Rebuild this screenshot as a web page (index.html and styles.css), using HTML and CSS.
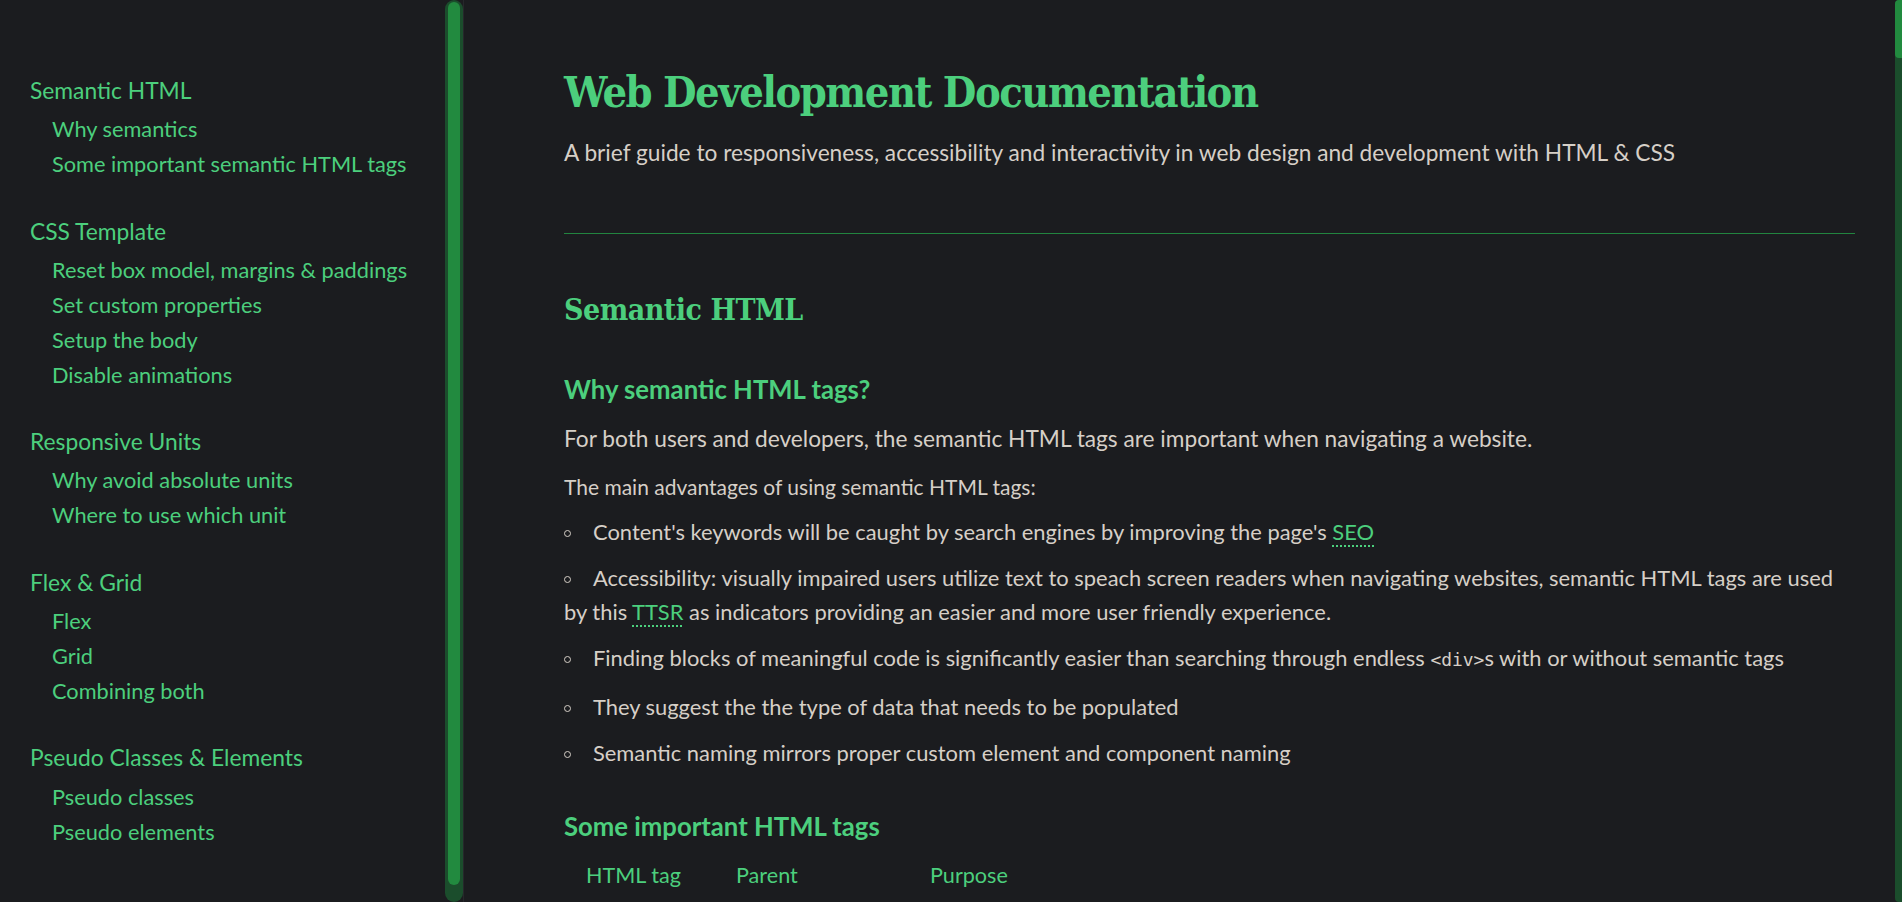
FILE: index.html
```html
<!DOCTYPE html>
<html lang="en">
<head>
<meta charset="utf-8">
<title>Web Development Documentation</title>
<link rel="stylesheet" href="styles.css">
</head>
<body>
<nav class="sidebar" id="navbar">
  <ul class="toc">
    <li class="toc-group">
      <a class="toc-head" href="#semantic-html">Semantic HTML</a>
      <ul class="toc-sub">
        <li><a href="#why-semantics">Why semantics</a></li>
        <li><a href="#semantic-tags">Some important semantic HTML tags</a></li>
      </ul>
    </li>
    <li class="toc-group">
      <a class="toc-head" href="#css-template">CSS Template</a>
      <ul class="toc-sub">
        <li><a href="#reset">Reset box model, margins &amp; paddings</a></li>
        <li><a href="#custom-properties">Set custom properties</a></li>
        <li><a href="#body">Setup the body</a></li>
        <li><a href="#animations">Disable animations</a></li>
      </ul>
    </li>
    <li class="toc-group">
      <a class="toc-head" href="#responsive-units">Responsive Units</a>
      <ul class="toc-sub">
        <li><a href="#absolute-units">Why avoid absolute units</a></li>
        <li><a href="#which-unit">Where to use which unit</a></li>
      </ul>
    </li>
    <li class="toc-group">
      <a class="toc-head" href="#flex-grid">Flex &amp; Grid</a>
      <ul class="toc-sub">
        <li><a href="#flex">Flex</a></li>
        <li><a href="#grid">Grid</a></li>
        <li><a href="#combining">Combining both</a></li>
      </ul>
    </li>
    <li class="toc-group">
      <a class="toc-head" href="#pseudo">Pseudo Classes &amp; Elements</a>
      <ul class="toc-sub">
        <li><a href="#pseudo-classes">Pseudo classes</a></li>
        <li><a href="#pseudo-elements">Pseudo elements</a></li>
      </ul>
    </li>
  </ul>
  <div class="scrollbar scrollbar-nav" aria-hidden="true">
    <div class="scrollbar-thumb"></div>
  </div>
</nav>

<main class="doc" id="main-doc">
  <header class="doc-header">
    <h1 class="doc-title">Web Development Documentation</h1>
    <p class="doc-lead">A brief guide to responsiveness, accessibility and interactivity in web design and development with HTML &amp; CSS</p>
  </header>
  <hr class="doc-rule">

  <section class="main-section" id="semantic-html">
    <h2 class="section-title">Semantic HTML</h2>

    <h3 class="sub-title" id="why-semantics">Why semantic HTML tags?</h3>
    <p class="text text-lead">For both users and developers, the semantic HTML tags are important when navigating a website.</p>
    <p class="text">The main advantages of using semantic HTML tags:</p>
    <ul class="bullets">
      <li>Content's keywords will be caught by search engines by improving the page's <abbr title="Search Engine Optimization">SEO</abbr></li>
      <li>Accessibility: visually impaired users utilize text to speach screen readers when navigating websites, semantic HTML tags are used by this <abbr title="Text To Speach Readers">TTSR</abbr> as indicators providing an easier and more user friendly experience.</li>
      <li>Finding blocks of meaningful code is significantly easier than searching through endless <code>&lt;div&gt;</code>s with or without semantic tags</li>
      <li>They suggest the the type of data that needs to be populated</li>
      <li>Semantic naming mirrors proper custom element and component naming</li>
    </ul>

    <h3 class="sub-title sub-title-gap" id="semantic-tags">Some important HTML tags</h3>
    <table class="tag-table">
      <thead>
        <tr><th class="col-tag">HTML tag</th><th class="col-parent">Parent</th><th>Purpose</th></tr>
      </thead>
      <tbody>
        <tr><td><code>&lt;header&gt;</code></td><td><code>&lt;body&gt;</code></td><td>Introductory content: logo, title, navigation</td></tr>
        <tr><td><code>&lt;nav&gt;</code></td><td><code>&lt;header&gt;</code></td><td>Major block of navigation links</td></tr>
        <tr><td><code>&lt;main&gt;</code></td><td><code>&lt;body&gt;</code></td><td>Dominant content of the document</td></tr>
      </tbody>
    </table>
  </section>
</main>

<div class="scrollbar scrollbar-page" aria-hidden="true">
  <div class="scrollbar-thumb"></div>
</div>
</body>
</html>
```
FILE: styles.css
```css
:root {
  --bg: #1b1c1f;
  --text: #d6cfc7;
  --green: #4ccf7d;
  --green-dark: #22843f;
  --track: #1b4d2c;
  --thumb: #228a3f;
}

html {
  background: var(--bg);
}

body {
  margin: 0;
  display: flex;
  align-items: flex-start;
  min-height: 100vh;
  background: var(--bg);
  color: var(--text);
  font-family: Lato, "Open Sans", sans-serif;
  font-size: 21px;
  line-height: 34px;
}

a {
  color: var(--green);
  text-decoration: none;
}

/* ---------- scrollbars ---------- */

.scrollbar {
  position: sticky;
  top: 0;
  flex: none;
  height: 100vh;
  box-sizing: border-box;
  background: var(--track);
  display: flex;
  flex-direction: column;
}

.scrollbar-nav {
  width: 18px;
  padding: 2px 3px;
  border-radius: 9px;
}

.scrollbar-nav .scrollbar-thumb {
  height: 883px;
  background: var(--thumb);
  border-radius: 7px;
}

.scrollbar-page {
  width: 7px;
  border-radius: 4px 0 0 4px;
}

.scrollbar-page .scrollbar-thumb {
  height: 58px;
  background: var(--thumb);
  border-radius: 4px 0 0 4px;
}

/* ---------- sidebar ---------- */

.sidebar {
  position: sticky;
  top: 0;
  flex: none;
  width: 464px;
  height: 100vh;
  box-sizing: border-box;
  display: flex;
  border-right: 1px solid #26282b;
}

.toc {
  flex: 1;
  list-style: none;
  margin: 0;
  padding: 72px 10px 72px 30px;
  display: flex;
  flex-direction: column;
  gap: 30.4px;
}

.toc-group {
  display: flex;
  flex-direction: column;
}

.toc-head {
  font-size: 22.8px;
  line-height: 36px;
  margin-bottom: 4.2px;
}

.toc-sub {
  list-style: none;
  margin: 0;
  padding: 0 0 0 22px;
}

.toc-sub a {
  display: block;
  font-size: 21.75px;
  line-height: 35px;
  white-space: nowrap;
}

/* ---------- main ---------- */

.doc {
  flex: 1;
  min-width: 0;
  padding: 62px 40px 40px 100px;
}

.doc-title {
  margin: 0;
  font-family: "DejaVu Serif Condensed", "DejaVu Serif", serif;
  font-weight: 700;
  font-size: 43px;
  letter-spacing: -1.5px;
  line-height: 60px;
  color: var(--green);
}

.doc-lead {
  margin: 14px 0 0;
  font-size: 22.7px;
  line-height: 34px;
}

.doc-rule {
  margin: 63px 0 0;
  border: 0;
  border-top: 1px solid var(--green-dark);
  height: 0;
}

.main-section {
  padding-top: 58px;
}

.section-title {
  margin: 0;
  font-family: "DejaVu Serif Condensed", "DejaVu Serif", serif;
  font-weight: 700;
  font-size: 30px;
  letter-spacing: -0.5px;
  line-height: 36px;
  color: var(--green);
}

.sub-title {
  margin: 46px 0 0;
  font-size: 25.7px;
  line-height: 31px;
  font-weight: 700;
  color: var(--green);
}

.sub-title-gap {
  margin-top: 41px;
}

.text {
  margin: 14px 0 0;
}

.text-lead {
  margin-top: 17px;
  font-size: 22.7px;
}

.bullets {
  list-style: none;
  margin: 11px 0 0;
  padding: 0;
  font-size: 21.9px;
}

.bullets li {
  margin-bottom: 12.2px;
}

.bullets li::before {
  content: "";
  display: inline-block;
  width: 5px;
  height: 5px;
  border: 1.3px solid var(--text);
  border-radius: 50%;
  margin-right: 22px;
  vertical-align: 3px;
}

abbr {
  color: var(--green);
  text-decoration: underline dotted var(--green);
  text-underline-offset: 5px;
  text-decoration-thickness: 2px;
}

code {
  font-family: "DejaVu Sans Mono", "Liberation Mono", monospace;
  font-size: 0.82em;
}

.tag-table {
  margin-top: 16px;
  border-collapse: collapse;
  table-layout: fixed;
  width: 100%;
  font-size: 21.6px;
}

.tag-table th,
.tag-table td {
  box-sizing: border-box;
  text-align: left;
  padding: 0 22px;
  vertical-align: top;
}

.tag-table th {
  font-weight: 400;
  color: var(--green);
}

.tag-table .col-tag {
  width: 150px;
}

.tag-table .col-parent {
  width: 194px;
}

.tag-table td {
  padding-top: 8px;
}
```
